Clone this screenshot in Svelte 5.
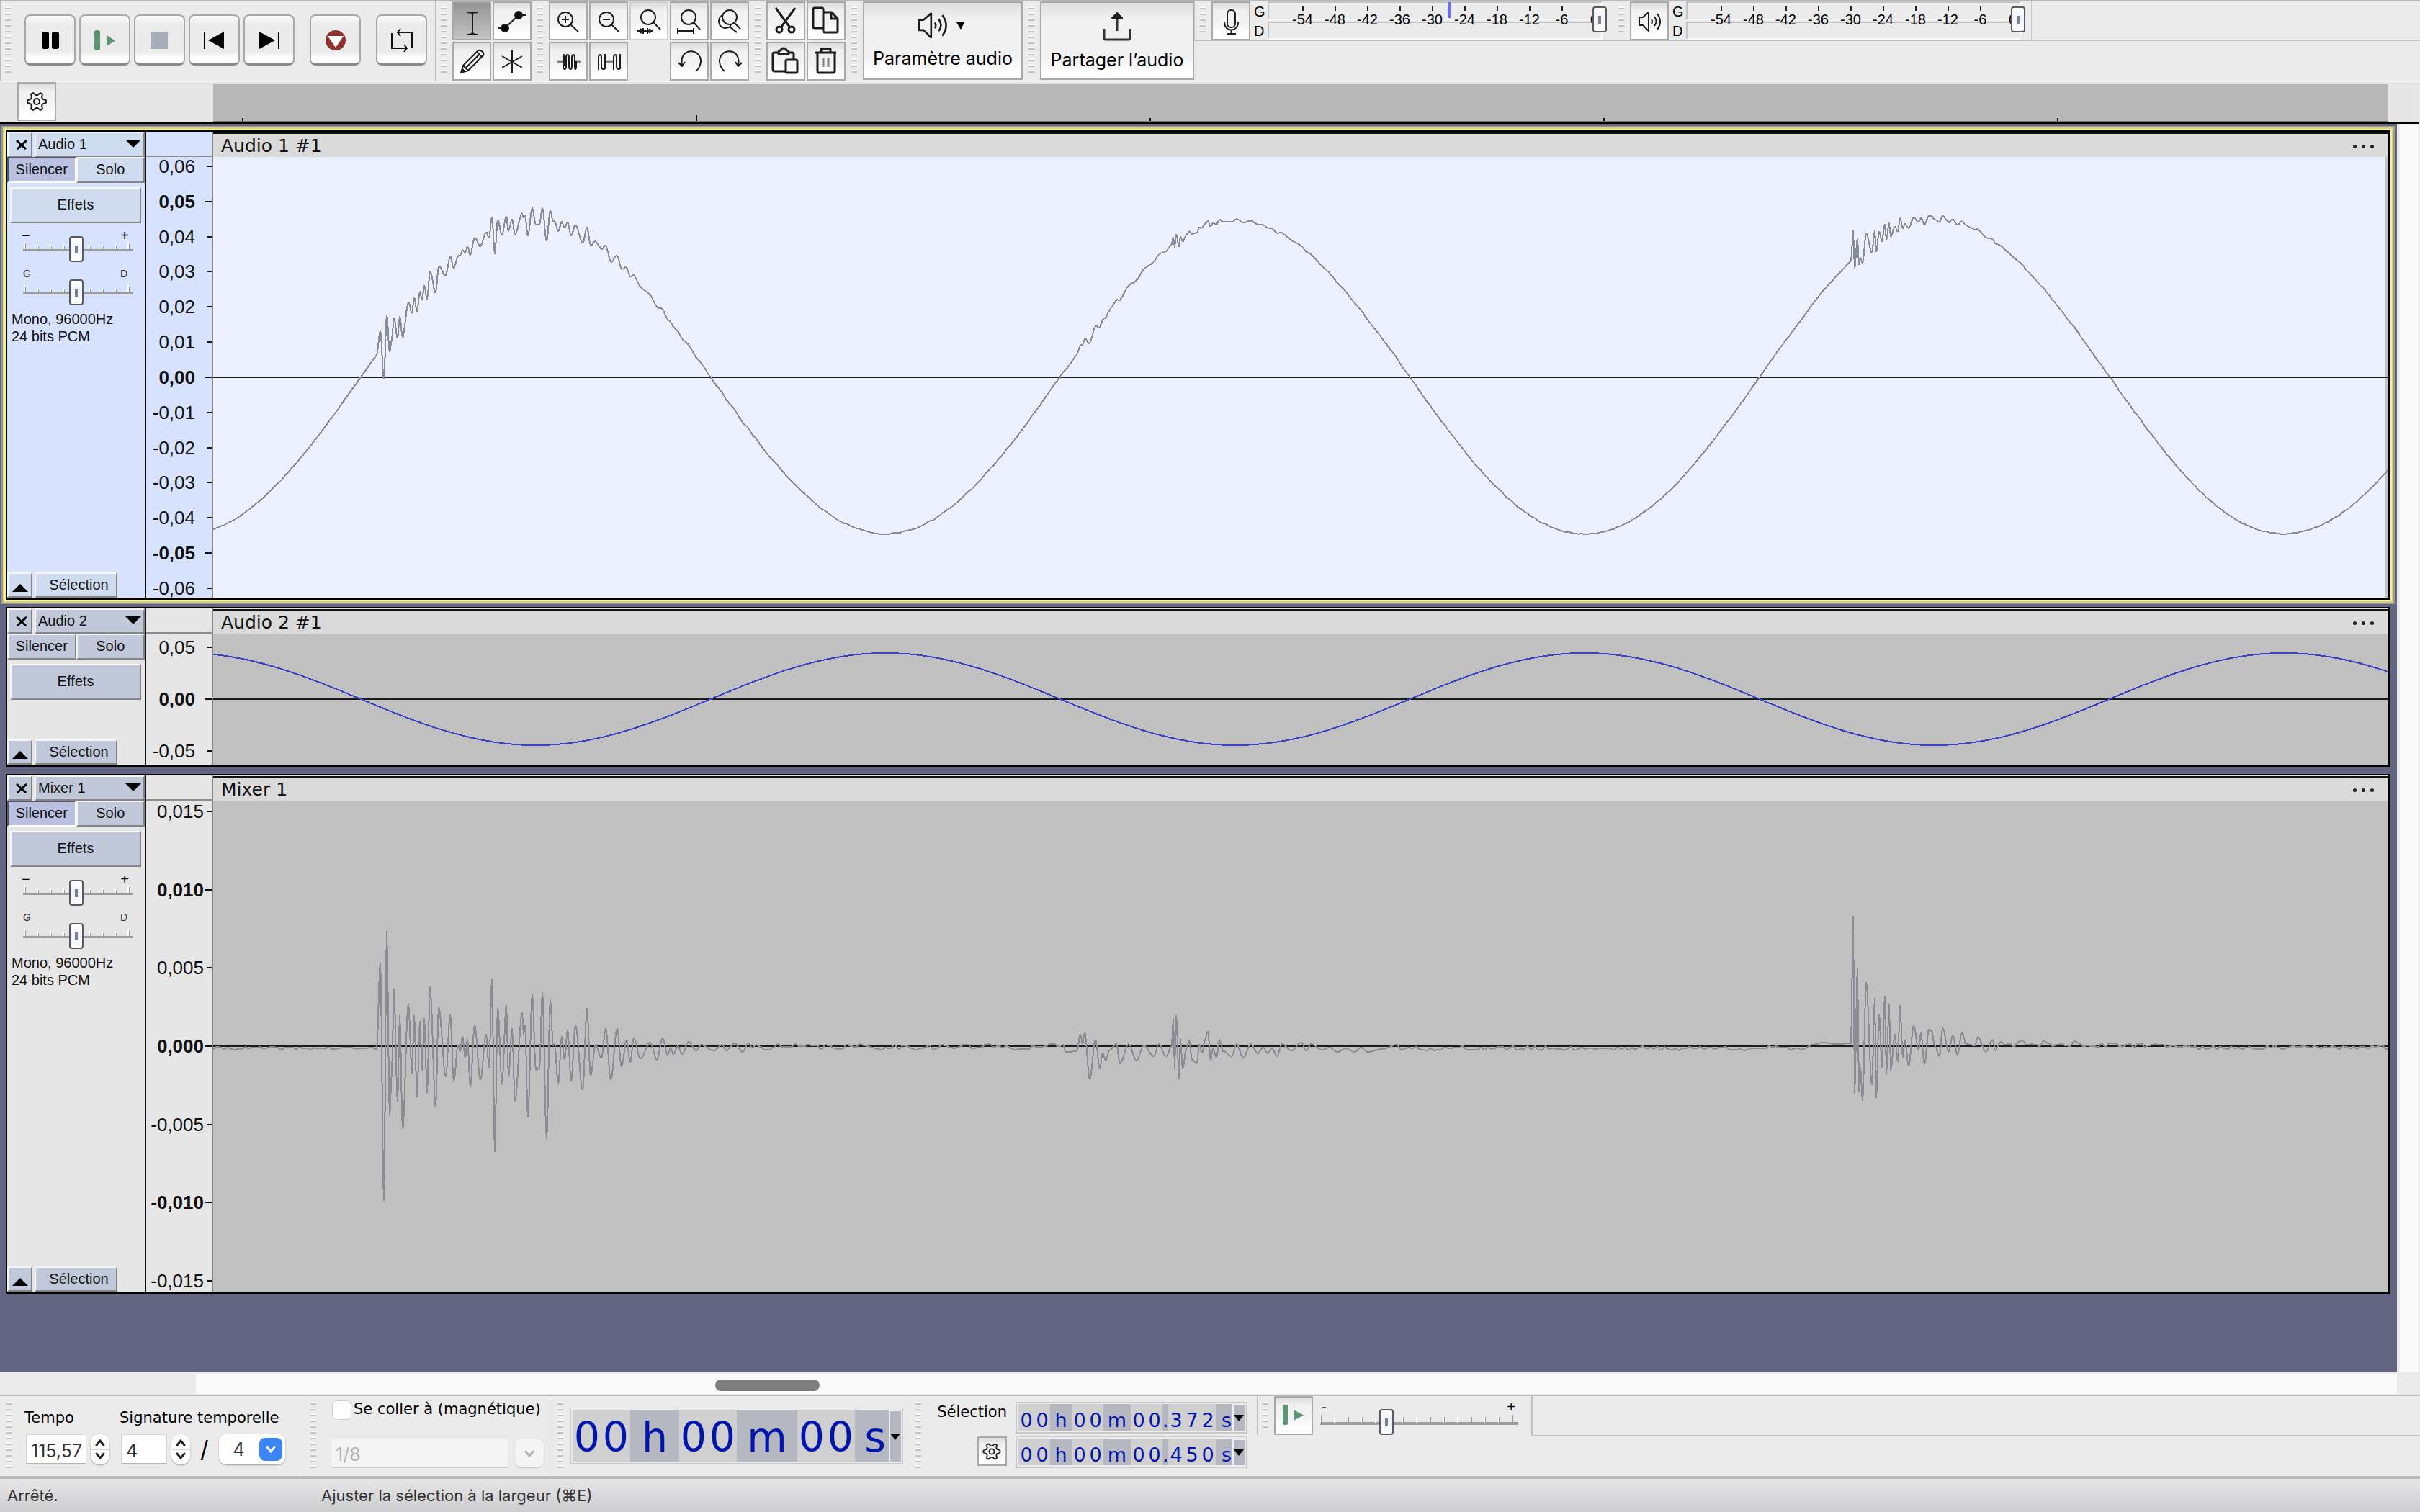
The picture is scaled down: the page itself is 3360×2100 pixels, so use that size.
<script>
  let tempo = $state("115,57");
  let beats = $state("4");
  let beatUnit = $state("4");
  let snap = $state(false);
  let speed = $state(45);
  let recLevel = $state(100);
  let playLevel = $state(100);
  let activeTool = $state("select");

  let tracks = $state([
    {
      id: "a1", name: "Audio 1", clip: "Audio 1 #1", kind: "tall", focused: true, muted: true,
      sliders: true, wave: "mix", gain: 50, pan: 50, half: 306,
      scale: ["0,06", "0,05", "0,04", "0,03", "0,02", "0,01", "0,00", "-0,01", "-0,02", "-0,03", "-0,04", "-0,05", "-0,06"],
      major: ["0,05", "0,00", "-0,05"]
    },
    {
      id: "a2", name: "Audio 2", clip: "Audio 2 #1", kind: "short", focused: false, muted: false,
      sliders: false, wave: "sine", gain: 50, pan: 50, half: 91,
      scale: ["0,05", "0,00", "-0,05"],
      major: ["0,00"]
    },
    {
      id: "m1", name: "Mixer 1", clip: "Mixer 1", kind: "mixer", focused: false, muted: true,
      sliders: true, wave: "noise", gain: 50, pan: 50, half: 341,
      scale: ["0,015", "0,010", "0,005", "0,000", "-0,005", "-0,010", "-0,015"],
      major: ["0,010", "0,000", "-0,010"]
    }
  ]);

  const meterMarks = ["-54", "-48", "-42", "-36", "-30", "-24", "-18", "-12", "-6", "0"];

  function rng(seed) {
    let s = seed >>> 0;
    return () => {
      s = (s * 1664525 + 1013904223) >>> 0;
      return s / 4294967296;
    };
  }

  const rand = rng(41);

  // background hiss between two positions, around a given level
  function hiss(from, to, mid, amp, step = 5) {
    const out = [];
    for (let x = from; x < to; x += step) out.push([x, mid + (rand() * 2 - 1) * amp]);
    return out;
  }

  // turning points of the residual signal: [x, height]
  const firstHit = [
    [227, -4], [232, 116], [237, -215], [241, 160], [245, -97], [248, -36], [251, 80], [256, -77], [259, 43],
    [263, -115], [271, 59], [276, -38], [279, 43], [283, -71], [287, 35], [290, -34], [293, 39], [297, -65],
    [301, 83], [309, -85], [313, 54], [323, -43], [329, 45], [334, -49], [340, 2], [343, -8], [346, 14],
    [350, -17], [353, 10], [357, -57], [363, 29], [371, -47], [379, 17], [383, -31], [387, 93], [391, -147],
    [395, 53], [401, -53], [407, 57], [410, -43], [415, 25], [419, -77], [429, 47], [431, 16], [433, 29],
    [437, -99], [443, 73], [448, -33], [453, -31], [457, 75], [463, -129], [468, 65], [472, 0], [474, 4],
    [479, -53], [484, 14], [488, -19], [492, 23], [497, -49], [503, 29], [513, -61], [519, 53], [524, -41],
    [531, 2], [539, -17], [545, 25], [552, -47], [561, 25], [567, -29], [574, 9], [579, -23], [584, 11],
    [593, -17], [607, 5], [616, -19], [624, 11], [631, -12], [635, -3], [639, -11], [645, 0], [651, -11],
    [660, 6], [671, -6], [677, 2], [695, -6], [707, 2], [712, -6], [724, 4], [735, -8], [743, 4]
  ];
  const secondHit = [
    [1184, -8], [1199, -7], [1204, 17], [1207, 3], [1210, 19], [1217, -46], [1225, 9], [1231, -32], [1235, -9],
    [1239, -20], [1244, -6], [1254, 3], [1259, -24], [1271, 3], [1282, -20], [1292, 1], [1306, -14], [1313, 3],
    [1323, -14], [1331, 0], [1333, 39], [1335, -32], [1337, 43], [1341, -46], [1343, 11], [1346, -32],
    [1351, -4], [1355, 9], [1359, -19], [1366, -24], [1369, 3], [1373, -10], [1377, 9], [1381, 21],
    [1385, -20], [1388, -3], [1393, -16], [1397, 9], [1402, -7], [1414, -14], [1421, 3], [1430, -16],
    [1441, 3], [1450, -10], [1458, -2], [1464, -10], [1470, -3], [1477, -14], [1484, 3], [1497, -6],
    [1511, 5], [1517, -6], [1525, 3], [1539, -5], [1550, -2], [1561, -8], [1573, -3], [1584, -8],
    [1594, -2], [1603, -8], [1623, -4], [1644, 2]
  ];
  const thirdHit = [
    [2220, 2], [2235, 5], [2255, 3], [2274, 4], [2277, 181], [2279, -66], [2283, 109], [2285, -64], [2287, -29],
    [2290, -76], [2295, 89], [2303, -54], [2307, 67], [2309, -72], [2313, 45], [2317, -30], [2321, 69],
    [2323, -40], [2327, 59], [2329, -34], [2335, 17], [2339, -22], [2342, 57], [2346, -16], [2349, 9],
    [2354, -28], [2361, 29], [2368, -6], [2371, 19], [2376, -26], [2382, 23], [2386, 21], [2390, 1],
    [2397, -14], [2401, 25], [2410, -8], [2415, 15], [2422, -12], [2428, 19], [2434, 3], [2446, 1],
    [2450, 13], [2461, -8], [2471, 9], [2474, -6], [2482, 6]
  ];

  const residual = [
    ...hiss(0, 226, -3, 2),
    ...firstHit,
    ...hiss(748, 1182, -1, 4, 6),
    ...secondHit,
    ...hiss(1650, 2215, -3, 3),
    ...thirdHit,
    ...hiss(2488, 2590, 4, 5, 6),
    ...hiss(2592, 2740, 1, 3),
    ...hiss(2742, 3024, -2, 3)
  ];

  const PERIOD = 971;
  const sineAt = (x) => Math.sin((2 * Math.PI * (x - 205)) / PERIOD);

  // eased between turning points, so peaks come out rounded
  function residualAt(x, i) {
    while (i < residual.length - 2 && residual[i + 1][0] < x) i++;
    const [x0, y0] = residual[i];
    const [x1, y1] = residual[i + 1];
    const t = (1 - Math.cos((Math.PI * (x - x0)) / (x1 - x0))) / 2;
    return [y0 + (y1 - y0) * t, i];
  }

  function wavePoints(kind) {
    const pts = [];
    let i = 0;
    for (let x = 0; x <= 3020; x += kind === "sine" ? 4 : 1) {
      let v;
      if (kind === "sine") {
        v = -64 * sineAt(x);
      } else {
        const r = residualAt(x, i);
        i = r[1];
        v = kind === "mix" ? 218 * sineAt(x) + 1 + r[0] * 0.224 : r[0];
      }
      pts.push(`${x},${(-v).toFixed(1)}`);
    }
    return pts.join(" ");
  }

  const waves = { mix: wavePoints("mix"), sine: wavePoints("sine"), noise: wavePoints("noise") };

  // closed outline of a six toothed cog
  const cog = Array.from({ length: 24 }, (_, i) => {
    const r = [13, 13, 9, 9][i % 4];
    const a = ((i - 0.5) / 24) * 2 * Math.PI;
    return `${(r * Math.cos(a)).toFixed(1)},${(r * Math.sin(a)).toFixed(1)}`;
  }).join(" ");

  const ticks = (n) => Array.from({ length: n }, (_, i) => i);
</script>

{#snippet gear()}
  <svg class="ico" viewBox="-27 -27 54 54"><polygon points={cog} /><circle r="4" /></svg>
{/snippet}

{#snippet speaker()}
  <path d="M13 22v11h5l8 8V15l-8 7z" /><path d="M30 25q2 3 0 6M34 21q5 7 0 13M38 17q8 11 0 22" />
{/snippet}

{#snippet slider(label, item, key)}
  <div class="slide">
    <svg class="ticks" viewBox="0 0 152 12" preserveAspectRatio="none">
      {#each ticks(9) as i}
        <rect x={1 + i * 18} y={i % 8 ? 5 : 1} width="2" height={i % 8 ? 6 : 10} fill="#fff" />
        <rect x={3 + i * 18} y={i % 8 ? 7 : 3} width="1" height={i % 8 ? 4 : 8} fill="#999" />
      {/each}
    </svg>
    <input type="range" min="0" max="100" aria-label={label} bind:value={item[key]} />
  </div>
{/snippet}

{#snippet meter(label, kind)}
  <section class="bar meterbar" aria-label={label}>
    <div class="grip small"></div>
    <button class="tool" aria-label={label}>
      <svg class="ico" viewBox="0 0 54 54">
        {#if kind === "rec"}
          <rect x="22" y="12" width="11" height="24" rx="5" />
          <path d="M18 29c0 14 19 14 19 0M27.500 40v5M21 45h13" />
        {:else}
          {@render speaker()}
        {/if}
      </svg>
    </button>
    <div class="channels"><span>G</span><span>D</span></div>
    <div class="meter">
      <div class="lane"></div>
      <div class="lane"></div>
      <div class="marks">
        {#each meterMarks as m}<span>{m}</span>{/each}
      </div>
      {#if kind === "rec"}
        <i class="peak"></i>
        <input type="range" min="0" max="100" aria-label="Niveau d'enregistrement" bind:value={recLevel} />
      {:else}
        <input type="range" min="0" max="100" aria-label="Niveau de lecture" bind:value={playLevel} />
      {/if}
    </div>
  </section>
{/snippet}

{#snippet smallTime(ms)}
  <div class="time little">
    <div class="code">
      <b><u>0</u><u>0</u></b><em>h</em><b><u>0</u><u>0</u></b><em class="wide">m</em><b><u>0</u><u>0</u></b><em class="dot">.</em><b>{#each ms as d}<u>{d}</u>{/each}</b><em class="last">s</em>
    </div>
    <button class="drop" aria-label="Format"><svg viewBox="0 0 14 9"><path d="M0 0h14l-7 9z" /></svg></button>
  </div>
{/snippet}

<div class="app">
  <header class="toolbars">
    <section class="bar transport" aria-label="Transport">
      <div class="grip"></div>
      <button class="big" aria-label="Pause"><svg viewBox="0 0 71 71"><rect x="24" y="24" width="10" height="24" rx="3" /><rect x="38" y="24" width="10" height="24" rx="3" /></svg></button>
      <button class="big" aria-label="Lecture"><svg viewBox="0 0 71 71" fill="#5c9474"><rect x="21" y="22" width="8" height="28" rx="3" /><path d="M38 29l12 7.500-12 7.500z" /></svg></button>
      <button class="big" aria-label="Stop"><svg viewBox="0 0 71 71" fill="#a6acb8"><rect x="23" y="24" width="24" height="24" rx="1" /></svg></button>
      <button class="big" aria-label="Début"><svg viewBox="0 0 71 71"><path d="M49 24v24L27 36z" /><rect x="21" y="24" width="2" height="24" /></svg></button>
      <button class="big" aria-label="Fin"><svg viewBox="0 0 71 71"><path d="M22 24v24l22-12z" /><rect x="48" y="24" width="2" height="24" /></svg></button>
      <button class="big apart" aria-label="Enregistrer"><svg viewBox="0 0 71 71"><circle cx="36" cy="36" r="14" fill="#8e3430" /><path d="M25 30h22L36 46z" fill="#fff" /></svg></button>
      <button class="big apart" aria-label="Boucle"><svg class="line" viewBox="0 0 71 71"><path d="M22 26v21h21M50 47V25H30M34 20l-4 5 4 5M39 42l4 5-4 5" /></svg></button>
    </section>

    <section class="bar divided" aria-label="Outils">
      <div class="grip"></div>
      <div class="grid two">
        <button class="tool" class:down={activeTool === "select"} aria-label="Sélection" onclick={() => (activeTool = "select")}>
          <svg class="ico" viewBox="0 0 54 54"><path d="M20 15q8 0 8 3 0-3 8-3M28 17v27M20 46q8 0 8-3 0 3 8 3M20 15h16M20 46h16" /></svg>
        </button>
        <button class="tool" class:down={activeTool === "envelope"} aria-label="Niveau" onclick={() => (activeTool = "envelope")}>
          <svg class="ico" viewBox="0 0 54 54"><path d="M7 37h10L36 19h11" /><circle cx="17" cy="37" r="5" fill="#000" /><circle cx="36" cy="19" r="5" fill="#000" /></svg>
        </button>
        <button class="tool" class:down={activeTool === "draw"} aria-label="Retouche" onclick={() => (activeTool = "draw")}>
          <svg class="ico" viewBox="0 0 54 54"><path d="M12 43l3-10 20-20q3-3 7 1 3 3 0 6L22 40zM15 33l7 7M34 14l7 7M19 36l18-18M12 43l2-5 3 3z" /></svg>
        </button>
        <button class="tool" class:down={activeTool === "multi"} aria-label="Multi-outils" onclick={() => (activeTool = "multi")}>
          <svg class="ico" viewBox="0 0 54 54"><path d="M27 12v31M13 20l28 16M41 20L13 36" /></svg>
        </button>
      </div>
    </section>

    <section class="bar" aria-label="Édition">
      <div class="grip"></div>
      <div class="grid five">
        <button class="tool" aria-label="Zoom avant"><svg class="ico" viewBox="0 0 54 54"><circle cx="23" cy="25" r="10" /><path d="M30 32l11 10M18 25h10M23 20v10" /></svg></button>
        <button class="tool" aria-label="Zoom arrière"><svg class="ico" viewBox="0 0 54 54"><circle cx="24" cy="25" r="10" /><path d="M31 32l10 10M19 25h10" /></svg></button>
        <button class="tool faint" aria-label="Zoom sur la sélection"><svg class="ico" viewBox="0 0 54 54"><circle cx="26" cy="22" r="10" /><path d="M33 29l10 10M11 41h22M19 37v8M25 37v8M15 38l4 3-4 3M29 38l-4 3 4 3" /></svg></button>
        <button class="tool" aria-label="Zoom sur le projet"><svg class="ico" viewBox="0 0 54 54"><circle cx="26" cy="22" r="10" /><path d="M33 29l9 10M11 41h22M11 37v8M33 37v8" /></svg></button>
        <button class="tool" aria-label="Bascule zoom"><svg class="ico" viewBox="0 0 54 54"><circle cx="27" cy="22" r="10" /><path d="M33 29l9 9M17 19c-7 4-7 17 4 18 4 0 7-2 8-5M27 35l10 8" /></svg></button>
        <button class="tool" aria-label="Rogner"><svg class="ico" viewBox="0 0 54 54"><path class="grey" d="M12 28h8M36 28h8" /><path d="M20 27v7q0 4 2 4t2-4V22q0-4 2-4t2 4v12q0 4 2 4t2-4V22q0-4 2-4t2 4v12q0 4 1 4t1-4v-7M20 29v-7q0-4 1-4t1 4v12" /></svg></button>
        <button class="tool" aria-label="Silence"><svg class="ico" viewBox="0 0 54 54"><path class="grey" d="M23 28h11" /><path d="M13 39V22q0-4 2-4t2 4v12q0 4 3 4t2-4V17M34 39V22q0-4 2-4t2 4v12q0 4 3 4t2-4V17" /></svg></button>
        <span></span>
        <button class="tool" aria-label="Annuler"><svg class="ico" viewBox="0 0 54 54"><path d="M17 33C12 7 44 8 43 28q-1 8-7 13M12 29l5 5 4-6" /></svg></button>
        <button class="tool" aria-label="Rétablir"><svg class="ico" viewBox="0 0 54 54"><path d="M39 33C44 7 12 8 13 28q1 8 7 13M44 29l-5 5-4-6" /></svg></button>
      </div>
    </section>

    <section class="bar" aria-label="Presse-papiers">
      <div class="grip"></div>
      <div class="grid two">
        <button class="tool" aria-label="Couper"><svg class="ico bold" viewBox="0 0 54 54"><path d="M13 9l19 26M40 9L21 35" /><circle cx="18" cy="39" r="4" /><circle cx="35" cy="39" r="4" /></svg></button>
        <button class="tool" aria-label="Copier"><svg class="ico bold" viewBox="0 0 54 54"><path d="M23 37H11q-2 0-2-2V11q0-2 2-2h10q2 0 2 2v4M25 15h10l8 9v17q0 2-2 2H25q-2 0-2-2V17q0-2 2-2zM34 15v9h9" /></svg></button>
        <button class="tool" aria-label="Coller"><svg class="ico bold" viewBox="0 0 54 54"><path d="M26 41H12q-3 0-3-3V17q0-2 2-2h5M32 15h4q2 0 2 2v7M17 17v-3q0-2 3-2 1-3 4-3t4 3q3 0 3 2v3z" /><rect x="27" y="25" width="16" height="18" rx="2" /></svg></button>
        <button class="tool" aria-label="Supprimer"><svg class="ico bold" viewBox="0 0 54 54"><path d="M12 15h29M20 14v-4h13v4M15 16v25q0 2 2 2h20q2 0 2-2V16" /><path class="grey" d="M23 22v13M30 22v13" /></svg></button>
      </div>
    </section>

    <section class="bar" aria-label="Configuration">
      <div class="grip"></div>
      <button class="tool caption setup">
        <svg class="ico" viewBox="0 0 80 36"><g transform="translate(-10 -18) scale(1.3)">{@render speaker()}</g><path d="M59 14h11l-5 10z" fill="#000" stroke="none" /></svg>
        <span>Paramètre audio</span>
      </button>
    </section>

    <section class="bar" aria-label="Partage">
      <div class="grip"></div>
      <button class="tool caption share">
        <svg class="ico" viewBox="7 8 40 40"><path class="thick" d="M9 31v13q0 2 2 2h32q2 0 2-2V31" /><path class="thick" d="M27 11v23" /><path d="M20 16l7-7 7 7z" fill="#222" /></svg>
        <span>Partager l’audio</span>
      </button>
    </section>

    {@render meter("Vumètre d'enregistrement", "rec")}
    {@render meter("Vumètre de lecture", "play")}
    <div class="rest"></div>
  </header>

  <div class="timeline">
    <button class="tool" aria-label="Options de la règle">{@render gear()}</button>
    <div class="ruler">
      {#each ticks(5) as i}
        <i class:tall={i === 1}></i>
      {/each}
    </div>
  </div>

  <main class="work">
    <div class="canvas">
      {#each tracks as t (t.id)}
        <article class="track {t.kind}" class:focused={t.focused}>
          <div class="panel">
            <div class="row head">
              <button class="chip close" aria-label="Fermer"><svg viewBox="0 0 16 14"><path d="M1 1l13 12M15 1L2 13" stroke="#000" stroke-width="3" /></svg></button>
              <button class="chip name">{t.name}<svg viewBox="0 0 22 11"><path d="M0 0h22L11 11z" /></svg></button>
            </div>
            <div class="row toggles">
              <button class="chip" class:on={t.muted} onclick={() => (t.muted = !t.muted)}>Silencer</button>
              <button class="chip">Solo</button>
            </div>
            <button class="chip effects">Effets</button>
            {#if t.sliders}
              <div class="ends sign"><span>−</span><span>+</span></div>
              {@render slider("Gain", t, "gain")}
              <div class="ends"><span>G</span><span>D</span></div>
              {@render slider("Balance", t, "pan")}
              <p class="format">Mono, 96000Hz<br />24 bits PCM</p>
            {/if}
            <div class="row foot">
              <button class="chip fold" aria-label="Réduire"><svg viewBox="0 0 22 11"><path d="M0 11h22L11 0z" /></svg></button>
              <button class="chip pick">Sélection</button>
            </div>
          </div>

          <div class="vruler">
            <div class="vhead"></div>
            <div class="vscale">
              {#each t.scale as s}
                <span class:major={t.major.includes(s)}>{s}<i></i></span>
              {/each}
            </div>
          </div>

          <div class="clip">
            <div class="cliphead">
              <span>{t.clip}</span>
              <button class="dots" aria-label="Menu du clip"><i></i><i></i><i></i></button>
            </div>
            <svg class="plot" viewBox="0 {-t.half} 3020 {t.half * 2}" preserveAspectRatio="none">
              <line x1="0" x2="3020" y1="0" y2="0" />
              <polyline class={t.wave} points={waves[t.wave]} />
            </svg>
          </div>
        </article>
      {/each}
    </div>
    <div class="vscroll"></div>
  </main>

  <div class="hscroll"><div class="rail"><div class="thumb"></div></div></div>

  <footer class="lower">
    <section class="bar tempo" aria-label="Signature temporelle">
      <div class="grip"></div>
      <div class="field">
        <label for="tempo">Tempo</label>
        <div class="line">
          <input id="tempo" type="text" bind:value={tempo} />
          <button class="spin" aria-label="Modifier le tempo"><svg viewBox="0 0 26 42"><path d="M8 15l5-6 5 6M8 27l5 6 5-6" /><path class="hair" d="M0 21h26" /></svg></button>
        </div>
      </div>
      <div class="field">
        <label for="beats">Signature temporelle</label>
        <div class="line">
          <input id="beats" class="beats" type="text" bind:value={beats} />
          <button class="spin" aria-label="Modifier la mesure"><svg viewBox="0 0 26 42"><path d="M8 15l5-6 5 6M8 27l5 6 5-6" /><path class="hair" d="M0 21h26" /></svg></button>
          <span class="slash">/</span>
          <div class="pop">
            <select aria-label="Unité de temps" bind:value={beatUnit}><option>2</option><option>4</option><option>8</option></select>
            <svg viewBox="0 0 32 32"><rect width="32" height="32" rx="8" /><path d="M11 13l5 6 5-6" /></svg>
          </div>
        </div>
      </div>
    </section>

    <section class="bar divided snapbar" aria-label="Magnétisme">
      <div class="grip"></div>
      <div class="field">
        <label class="check"><input type="checkbox" bind:checked={snap} />Se coller à (magnétique)</label>
        <div class="combo">
          <select aria-label="Pas du magnétisme" disabled><option>1/8</option></select>
          <span class="arrow"><svg viewBox="0 0 40 40"><path d="M15 18l5 6 5-6" /></svg></span>
        </div>
      </div>
    </section>

    <section class="bar divided timebar" aria-label="Temps">
      <div class="grip"></div>
      <div class="time large">
        <div class="code">
          <b><u>0</u><u>0</u></b><em>h</em><b><u>0</u><u>0</u></b><em class="wide">m</em><b><u>0</u><u>0</u></b><em class="last">s</em>
        </div>
        <button class="drop" aria-label="Format"><svg viewBox="0 0 14 9"><path d="M0 0h14l-7 9z" /></svg></button>
      </div>
    </section>

    <section class="bar divided selbar" aria-label="Sélection">
      <div class="grip"></div>
      <div class="selside">
        <span>Sélection</span>
        <button class="tool" aria-label="Options de sélection">{@render gear()}</button>
      </div>
      <div class="times">
        {@render smallTime(["3", "7", "2"])}
        {@render smallTime(["4", "5", "0"])}
      </div>
    </section>

    <section class="bar divided speedbar" aria-label="Lecture à vitesse variable">
      <div class="grip small"></div>
      <button class="tool" aria-label="Lire à la vitesse choisie"><svg class="ico" viewBox="0 0 54 54"><g fill="#5c9474" stroke="none"><rect x="12" y="12" width="7" height="28" rx="2" /><path d="M27 19l14 7.500L27 34z" /></g></svg></button>
      <div class="speed">
        <div class="ends sign"><span>-</span><span>+</span></div>
        <div class="slide">
          <svg class="ticks" viewBox="0 0 275 12" preserveAspectRatio="none">
            {#each ticks(15) as i}
              <rect x={i * 19} y={i % 14 ? 4 : 1} width="1" height="12" fill="#fff" />
              <rect x={1 + i * 19} y={i % 14 ? 4 : 1} width="1" height="12" fill="#999" />
            {/each}
          </svg>
          <input type="range" min="0" max="140" aria-label="Vitesse" bind:value={speed} />
        </div>
      </div>
    </section>
    <div class="rest"></div>
  </footer>

  <div class="status">
    <span class="state">Arrêté.</span>
    <span>Ajuster la sélection à la largeur (⌘E)</span>
  </div>
</div>

<style>
  :global(body) {
    margin: 0;
    background: #ebebeb;
  }

  * {
    box-sizing: border-box;
  }

  .app {
    min-height: 100vh;
    display: flex;
    flex-direction: column;
    background: #ebebeb;
    color: #000;
    font-family: "Liberation Sans", Arial, sans-serif;
    font-size: 20px;
    line-height: 24px;
  }

  button,
  input,
  select {
    margin: 0;
    padding: 0;
    border: 0;
    font: inherit;
    color: inherit;
    background: none;
    border-radius: 0;
  }

  svg {
    display: block;
  }

  /* toolbars */
  .toolbars {
    display: flex;
    align-items: flex-start;
    height: 113px;
    border-top: 1px solid #b9b9b9;
    border-bottom: 1px solid #bdbdbd;
  }

  .bar {
    flex: none;
    display: flex;
    align-items: flex-start;
    gap: 8px;
    padding: 1px 0 0 8px;
    height: 111px;
  }

  .bar.divided {
    border-left: 1px solid #bdbdbd;
    padding-left: 7px;
  }

  .rest {
    flex: 1;
    height: 56px;
    border-left: 1px solid #c6c6c6;
    border-bottom: 2px solid #c6c6c6;
  }

  .grip {
    flex: none;
    width: 8px;
    height: 92px;
    margin-top: 7px;
    background: repeating-linear-gradient(#f8f8ff 0 2px, #c2c2c2 2px 4px, transparent 4px 8px);
  }

  .grip.small {
    height: 36px;
  }

  .transport {
    width: 604px;
    gap: 5px;
    border-left: 1px solid #bdbdbd;
    padding-left: 6px;
  }

  .transport .grip {
    margin-right: 14px;
  }

  .big {
    width: 71px;
    height: 71px;
    margin-top: 18px;
    border: 2px solid #a9a9a9;
    border-bottom: 3px solid #8b8b8b;
    border-radius: 8px;
    background: linear-gradient(#fafafa, #ebebeb 20%, #ebebeb 75%, #fff 88%);
  }

  .big.apart {
    margin-left: 16px;
  }

  .big svg {
    width: 71px;
    height: 71px;
    margin: -2px;
  }

  .big svg.line {
    fill: none;
    stroke: #111;
    stroke-width: 2;
  }

  .grid {
    display: grid;
    gap: 2px;
  }

  .two {
    grid-template-columns: repeat(2, 54px);
  }

  .five {
    grid-template-columns: repeat(5, 54px);
  }

  .tool {
    flex: none;
    width: 54px;
    height: 54px;
    border: 2px solid #a9a9a9;
    background: linear-gradient(#dcdcdc, #f0f0f0 22%, #f4f4f4 60%, #fff 85%);
  }

  .tool.down {
    background: linear-gradient(#959595, #c4c4c4);
  }

  .tool.faint {
    border-color: #cfcfcf;
  }

  .tool .ico {
    width: 54px;
    height: 54px;
    margin: -2px;
  }

  .ico {
    fill: none;
    stroke: #1c1c1c;
    stroke-width: 2;
    stroke-linejoin: round;
  }

  .ico.bold {
    stroke-width: 3;
  }

  .ico .grey {
    stroke: #808080;
    stroke-width: 3;
  }

  .ico .thick {
    stroke: #333;
    stroke-width: 3;
  }

  .tool.caption {
    height: 109px;
    display: flex;
    flex-direction: column;
    align-items: center;
    font: 25px/30px Inter, sans-serif;
    background: linear-gradient(#dedede, #f1f1f1 22%, #f1f1f1 70%, #fff 92%);
  }

  .setup {
    width: 222px;
  }

  .share {
    width: 214px;
  }

  .setup .ico {
    width: 80px;
    height: 36px;
    margin: 13px 0;
  }

  .share .ico {
    width: 40px;
    height: 40px;
    margin: 13px 0 11px;
  }

  /* level meters */
  .meterbar {
    width: 581px;
    height: 56px;
    border-left: 1px solid #c6c6c6;
    border-bottom: 1px solid #bdbdbd;
    padding-left: 7px;
  }

  .channels {
    width: 16px;
    margin-left: -3px;
    display: flex;
    flex-direction: column;
    line-height: 28px;
    height: 54px;
  }

  .channels span {
    height: 27px;
  }

  .meter {
    position: relative;
    width: 465px;
    margin-left: -5px;
    height: 53px;
    display: flex;
    flex-direction: column;
    gap: 2px;
  }

  .lane {
    flex: 1;
    border: 2px solid #fafaff;
    border-top-color: #c4c4c4;
    border-left-color: #c4c4c4;
  }

  .marks {
    position: absolute;
    inset: 7px 0 0 26px;
    display: flex;
    line-height: 22px;
  }

  .marks span {
    flex: none;
    width: 45px;
    text-align: center;
  }

  .marks span::before {
    content: "";
    display: block;
    width: 2px;
    height: 6px;
    margin: 0 auto 1px;
    background: #222;
  }

  .peak {
    position: absolute;
    left: 250px;
    top: 1px;
    width: 4px;
    height: 22px;
    background: #6a6cf0;
  }

  .meter input {
    position: absolute;
    inset: 7px -6px 10px 0;
    width: 471px;
    height: 36px;
  }

  input[type="range"] {
    appearance: none;
    background: none;
  }

  input[type="range"]::-webkit-slider-thumb {
    appearance: none;
    width: 20px;
    height: 36px;
    border: 2px solid #5a5a5e;
    border-radius: 4px;
    background:
      linear-gradient(#808086, #808086) center / 4px 11px no-repeat,
      linear-gradient(#fff, #eef2ff 50%, #fff);
  }

  /* time ruler */
  .timeline {
    display: flex;
    height: 59px;
    margin-right: 2px;
    padding: 0 42px 0 24px;
    border-bottom: 3px solid #000;
    background: #e6e6e6;
    border-top: 1px solid #f2f2f2;
  }

  .ruler {
    flex: 1;
    margin: 2px 0 0 218px;
    display: flex;
    align-items: flex-end;
    gap: 628px;
    padding-left: 40px;
    overflow: hidden;
    background: #b8b8b8;
    border-bottom: 1px solid #777;
  }

  .ruler i {
    flex: none;
    width: 2px;
    height: 4px;
    background: #111;
  }

  .ruler i.tall {
    height: 8px;
  }

  /* tracks */
  .work {
    flex: 1;
    display: flex;
  }

  .canvas {
    flex: 1;
    display: flex;
    flex-direction: column;
    gap: 10px;
    padding: 9px 9px 0 8px;
    background: #636683;
  }

  .vscroll {
    width: 32px;
    background: #fafafa;
    border-left: 4px solid #e9e9ec;
    border-right: 2px solid #ebebeb;
  }

  .track {
    --face: #e6e6e6;
    --button: #c0c8d9;
    --wave: #c0c0c0;
    display: flex;
    border: solid #000;
    border-width: 2px 3px 3px 2px;
    background: var(--face);
  }

  .track.focused {
    --face: #d6e2fe;
    --button: #cfdbef;
    --wave: #ebf1ff;
    box-shadow: 0 0 0 2px #f8f389, 0 0 0 4px #d6d28e, 0 0 0 6px #9d9c86;
  }

  .tall {
    height: 652px;
  }

  .short {
    height: 222px;
  }

  .mixer {
    height: 722px;
  }

  .panel {
    width: 193px;
    display: flex;
    flex-direction: column;
    border-right: 2px solid #111;
  }

  .row {
    display: flex;
  }

  .chip {
    padding-bottom: 2px;
    border: 2px solid #858585;
    border-top-color: #f4f6fa;
    border-left-color: #f4f6fa;
    background: var(--button);
    color: #111;
  }

  .head {
    height: 35px;
    gap: 3px;
  }

  .close {
    width: 35px;
    padding: 0 0 0 10px;
  }

  .close svg {
    width: 16px;
    height: 14px;
  }

  .name {
    flex: 1;
    display: flex;
    align-items: center;
    justify-content: space-between;
    padding: 0 3px 2px;
  }

  .name svg,
  .fold svg {
    width: 22px;
    height: 11px;
  }

  .toggles {
    height: 36px;
  }

  .toggles .chip {
    flex: 1;
  }

  .chip.on {
    background: #b9c0e0;
    border-color: #55556a #fff #fff #55556a;
  }

  .effects {
    height: 50px;
    margin: 6px 5px 0 4px;
  }

  .ends {
    display: flex;
    justify-content: space-between;
    height: 14px;
    font-size: 14px;
    line-height: 14px;
    color: #333;
  }

  .ends.sign {
    font-size: 20px;
    color: #000;
  }

  .panel .ends {
    margin: -3px 24px 1px 22px;
  }

  .panel .sign {
    margin: 10px 22px -6px 20px;
  }

  .slide {
    position: relative;
    height: 36px;
    background: linear-gradient(#9c9c9c, #9c9c9c) 0 18px / 100% 3px no-repeat;
  }

  .panel .slide {
    flex: none;
    margin: 0 17px 12px 22px;
  }

  .slide .ticks {
    position: absolute;
    top: 7px;
    left: 0;
    width: 100%;
    height: 12px;
  }

  .slide input {
    position: absolute;
    inset: 0;
    width: 100%;
    height: 36px;
  }

  .panel .slide input {
    width: calc(100% - 4px);
  }

  .format {
    margin: -5px 0 0 6px;
    color: #111;
  }

  .foot {
    height: 35px;
    margin-top: auto;
    gap: 3px;
  }

  .fold {
    width: 35px;
    padding: 8px 5px 0;
  }

  .pick {
    width: 115px;
    padding-left: 8px;
  }

  .vruler {
    width: 93px;
    display: flex;
    flex-direction: column;
    border-right: 2px solid #858585;
  }

  .vhead {
    height: 35px;
    border-bottom: 2px solid #8d8d8d;
  }

  .vscale {
    flex: 1;
    display: flex;
    flex-direction: column;
    justify-content: space-between;
    font-size: 26px;
    line-height: 26px;
    color: #111;
  }

  .vscale span {
    display: flex;
    justify-content: flex-end;
    align-items: center;
    gap: 17px;
  }

  .vscale i {
    width: 6px;
    height: 2px;
    background: #111;
  }

  .vscale .major {
    font-weight: bold;
    gap: 13px;
  }

  .vscale .major i {
    width: 10px;
  }

  .short .vscale {
    padding: 6px 0;
  }

  .mixer .vscale {
    padding: 2px 0;
  }

  .mixer .vscale span {
    gap: 5px;
  }

  .mixer .vscale .major {
    gap: 1px;
  }

  .clip {
    flex: 1;
    min-width: 0;
    display: flex;
    flex-direction: column;
    padding-top: 1px;
  }

  .cliphead {
    height: 34px;
    display: flex;
    align-items: center;
    justify-content: space-between;
    padding: 2px 20px 0 11px;
    border-top: 2px solid #111;
    background: #dadada;
    font: 25px/30px "DejaVu Sans", sans-serif;
    color: #111;
  }

  .dots {
    display: flex;
    gap: 7px;
  }

  .dots i {
    width: 5px;
    height: 5px;
    border-radius: 50%;
    background: #222;
  }

  .plot {
    flex: 1;
    min-height: 0;
    width: 100%;
    background: var(--wave);
    overflow: hidden;
  }

  .focused .plot {
    background: linear-gradient(#bfc3c1, #bfc3c1) right / 4px 100% no-repeat var(--wave);
  }

  .plot line,
  .plot polyline {
    fill: none;
    stroke: #1c1c1c;
    stroke-width: 2;
    vector-effect: non-scaling-stroke;
    shape-rendering: crispEdges;
  }

  .plot polyline {
    stroke: #8c8c94;
    stroke-linejoin: bevel;
  }

  .plot .sine {
    stroke: #3843c6;
  }

  /* horizontal scrollbar */
  .hscroll {
    height: 32px;
    padding: 3px 32px 2px 272px;
    background: #ebebeb;
  }

  .rail {
    height: 27px;
    padding: 7px 0 0 721px;
    background: #fafafa;
  }

  .thumb {
    width: 145px;
    height: 16px;
    border-radius: 8px;
    background: #7f7f7f;
  }

  /* lower toolbars */
  .lower {
    display: flex;
    align-items: flex-start;
    height: 113px;
    border-top: 1px solid #bdbdbd;
    border-bottom: 1px solid #bdbdbd;
    font: 21px/24px "DejaVu Sans", sans-serif;
  }

  .lower .bar {
    height: 111px;
  }

  .tempo {
    width: 423px;
  }

  .tempo .grip {
    margin-right: 12px;
  }

  .field {
    display: flex;
    flex-direction: column;
  }

  .tempo .field {
    padding-top: 17px;
    gap: 11px;
    margin-right: 8px;
  }

  .tempo .field label {
    margin-left: -2px;
  }

  .line {
    display: flex;
    align-items: center;
    gap: 6px;
  }

  input[type="text"] {
    width: 84px;
    height: 42px;
    padding: 4px 0 0 6px;
    background: #fff;
    border: 1px solid #d8d8d8;
    border-bottom: 2px solid #b5b5b5;
    font: 25px/30px Inter, sans-serif;
    color: #333;
  }

  input.beats {
    width: 64px;
  }

  .spin {
    width: 26px;
    height: 42px;
    border-radius: 12px;
    background: #fff;
    box-shadow: 0 1px 2px #999;
  }

  .spin svg {
    width: 26px;
    height: 42px;
    fill: none;
    stroke: #222;
    stroke-width: 3;
    stroke-linecap: round;
  }

  .spin .hair {
    stroke: #d9d9d9;
    stroke-width: 2;
  }

  .slash {
    padding: 0 8px;
    font: 32px/40px Inter, sans-serif;
  }

  .pop {
    position: relative;
  }

  .pop select {
    display: block;
    width: 92px;
    height: 42px;
    padding-left: 20px;
    appearance: none;
    border-radius: 10px;
    background: #fff;
    box-shadow: 0 1px 2px #999;
    font: 25px/30px Inter, sans-serif;
    color: #333;
  }

  .pop svg {
    position: absolute;
    right: 4px;
    top: 5px;
    width: 32px;
    height: 32px;
    pointer-events: none;
  }

  .pop rect {
    fill: #3a84f6;
  }

  .pop path {
    fill: none;
    stroke: #fff;
    stroke-width: 3;
    stroke-linecap: round;
  }

  .snapbar {
    width: 343px;
  }

  .snapbar .field {
    margin-left: 12px;
    padding-top: 5px;
    gap: 25px;
  }

  .check {
    display: flex;
    gap: 3px;
    height: 28px;
    margin-left: 2px;
    white-space: nowrap;
  }

  .check input {
    appearance: none;
    width: 27px;
    height: 27px;
    border: 1px solid #cfcfcf;
    border-radius: 7px;
    background: #fff;
  }

  .check input:checked {
    background: #3a84f6;
  }

  .combo {
    display: flex;
    gap: 9px;
  }

  .combo select {
    appearance: none;
    width: 247px;
    height: 41px;
    padding: 4px 0 0 6px;
    background: #f4f4f4;
    border: 1px solid #e0e0e0;
    border-bottom: 2px solid #cfcfcf;
    font: 25px/30px Inter, sans-serif;
    color: #b4b4b4;
    opacity: 1;
  }

  .arrow {
    width: 40px;
    height: 40px;
    border-radius: 9px;
    background: #f4f4f4;
    box-shadow: 0 1px 2px #c0c0c0;
  }

  .arrow svg {
    fill: none;
    stroke: #b0b0b0;
    stroke-width: 3;
    stroke-linecap: round;
  }

  /* time displays */
  .timebar {
    width: 496px;
  }

  .time {
    display: flex;
    border: solid #c9c9c9;
    border-width: 1px 1px 2px;
    padding: 2px;
    color: #0014ae;
  }

  .code {
    display: flex;
    flex: 1;
    background: #b5b8c1;
  }

  .code b {
    display: flex;
    font-weight: normal;
    background: #d0d0d0;
  }

  .code u {
    text-decoration: none;
    text-align: center;
  }

  .code em {
    font-style: normal;
    text-align: center;
  }

  .large {
    width: 462px;
    height: 79px;
    margin: 15px 0 0 2px;
    font-size: 57px;
    line-height: 76px;
  }

  .large u {
    width: 40px;
  }

  .large em {
    width: 68px;
  }

  .large em.wide {
    width: 84px;
  }

  .large em.last {
    flex: 1;
    width: auto;
    text-align: right;
    padding-right: 4px;
  }

  .little {
    width: 320px;
    height: 44px;
    font-size: 27px;
    line-height: 46px;
  }

  .little u {
    width: 22px;
  }

  .little em {
    width: 30px;
  }

  .little em.wide {
    width: 38px;
  }

  .little em.dot {
    width: 8px;
  }

  .little em.last {
    width: 22px;
    text-align: right;
  }

  .code b,
  .code em {
    height: 100%;
  }

  .drop {
    width: 17px;
    border-left: 2px solid #eef0f6;
    border-top: 2px solid #eef0f6;
    background: #b5b8c1;
    color: #000;
  }

  .drop svg {
    width: 14px;
    height: 9px;
  }

  .selbar {
    width: 482px;
    margin-left: 1px;
    border-left-width: 2px;
  }

  .selside {
    width: 98px;
    margin-left: 13px;
    padding-top: 9px;
    display: flex;
    flex-direction: column;
    align-items: flex-end;
    gap: 22px;
  }

  .selside .tool {
    width: 41px;
    height: 41px;
    overflow: hidden;
  }

  .selside .ico {
    width: 48px;
    height: 48px;
    margin: -6px;
  }

  .times {
    display: flex;
    flex-direction: column;
    gap: 4px;
    margin: 7px 0 0 5px;
  }

  .lower .speedbar {
    width: 382px;
    height: 56px;
    border-bottom: 1px solid #bdbdbd;
    border-right: 1px solid #bdbdbd;
    padding-top: 0;
  }

  .speedbar .grip {
    margin-top: 8px;
  }

  .speed {
    width: 275px;
    margin-left: 2px;
  }

  .speed .ends {
    margin: 9px 4px 0 2px;
    height: 9px;
    font: 20px/12px "Liberation Sans", Arial, sans-serif;
  }

  .speed .slide {
    background-size: 100% 4px;
  }

  .status {
    flex: none;
    display: flex;
    height: 49px;
    padding-left: 10px;
    align-items: center;
    border-top: 3px solid #b9b9b9;
    background: linear-gradient(#e7e6e9, #cdccce);
    font: 22px/26px Inter, "DejaVu Sans", sans-serif;
    color: #333;
  }

  .state {
    width: 436px;
  }
</style>
